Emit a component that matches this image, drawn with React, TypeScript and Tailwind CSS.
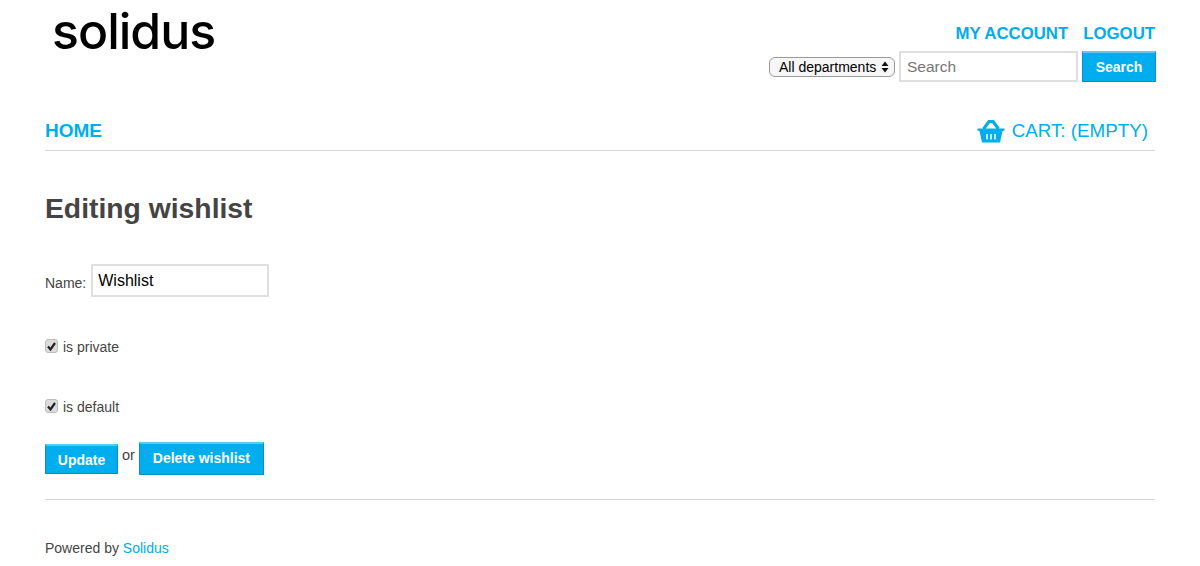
const sans = "font-['Liberation_Sans',Arial,sans-serif]";

function Basket() {
  return (
    <svg width="28" height="24" viewBox="0 0 28 24" fill="#00adee" aria-hidden="true">
      <path d="M0.5 9.5H27.5V11.5L25.5 12L23 23.5H5L2.5 12L0.5 11.5Z" />
      <path d="M6.5 10L12 2.5M21.5 10L16 2.5" stroke="#00adee" strokeWidth="3" fill="none" />
      <path d="M11 1H17V4H11Z" />
      <path d="M10 15V20.5M14 15V20.5M18 15V20.5" stroke="#fff" strokeWidth="1.5" fill="none" />
    </svg>
  );
}

function Check({ label }: { label: string }) {
  return (
    <label className="flex items-start h-[20px] text-[14px] text-[#444]">
      <span className="w-[13px] h-[14px] rounded-[3px] border border-[#bdbdbd] bg-[#dcdcdc] flex items-center justify-center">
        <svg width="11" height="11" viewBox="0 0 11 11" aria-hidden="true">
          <path d="M2 5.5L4.5 8.5L9 2" stroke="#222" strokeWidth="2.2" fill="none" />
        </svg>
      </span>
      <span className="ml-[5px] mt-[-2px]">{label}</span>
    </label>
  );
}

function Btn({ children, className }: { children: string; className: string }) {
  return (
    <button className={`bg-[#00adee] text-white font-bold text-[14px] border border-[#0b8fc4] border-t-[#5cc8f2] border-t-2 ${className}`}>
      {children}
    </button>
  );
}

export default function App() {
  return (
    <div className={`${sans} bg-white h-[566px] overflow-hidden px-[45px] text-[#444]`}>
      <header className="flex justify-between h-[100px]">
        <div className="ml-[7px] mt-[3px] font-['Inter',sans-serif] font-medium text-[50px] leading-[56px] tracking-[-1px] text-black">
          solidus
        </div>
        <div className="flex flex-col items-end">
          <nav className="flex gap-[15px] mt-[24px] h-[27px] text-[16.8px] leading-[20px] font-bold text-[#00adee]">
            <a>MY ACCOUNT</a>
            <a>LOGOUT</a>
          </nav>
          <div className="flex items-center mr-[-1px]">
            <div className="relative flex items-center w-[126px] h-[20px] rounded-[6px] border border-[#9a9a9a] bg-[#f6f6f6] pl-[9px] pt-[1px] text-[14px] text-black">
              All departments
              <svg className="absolute right-[5px] top-[3px]" width="8" height="12" viewBox="0 0 8 12" aria-hidden="true">
                <path d="M4 0.5L7.5 5H0.5ZM4 11.5L0.5 7H7.5Z" fill="#111" />
              </svg>
            </div>
            <input
              placeholder="Search"
              className="ml-[4px] w-[179px] h-[31px] border-2 border-[#dfdfdf] px-[6px] text-[15.5px] placeholder:text-[#757575] outline-none"
            />
            <Btn className="ml-[4px] w-[74px] h-[31px]">Search</Btn>
          </div>
        </div>
      </header>

      <div className="flex justify-between items-center h-[51px] border-b border-[#d6d6d6] text-[#00adee]">
        <a className="font-bold text-[19px] mt-[12px]">HOME</a>
        <div className="flex items-center mt-[12px] mr-[7px]">
          <Basket />
          <span className="ml-[7px] text-[18.8px]">CART: (EMPTY)</span>
        </div>
      </div>

      <h1 className="mt-[39px] text-[28.3px] leading-[36px] font-bold">Editing wishlist</h1>

      <div className="flex items-center mt-[38px] h-[33px] text-[14px]">
        <span className="mt-[5px]">Name:</span>
        <input
          defaultValue="Wishlist"
          className="ml-[5px] w-[178px] h-[33px] border-2 border-[#dfdfdf] px-[5px] text-[16px] text-black outline-none"
        />
      </div>

      <div className="mt-[42px]"><Check label="is private" /></div>
      <div className="mt-[40px]"><Check label="is default" /></div>

      <div className="flex items-start mt-[23px] text-[14.5px]">
        <Btn className="mt-[2px] w-[73px] h-[30px] pt-[1px]">Update</Btn>
        <span className="ml-[4px] mt-[3px]">or</span>
        <Btn className="ml-[4px] w-[125px] h-[33px] pb-[2px]">Delete wishlist</Btn>
      </div>

      <div className="mt-[24px] border-t border-[#d6d6d6]" />
      <p className="mt-[38px] text-[14px]">
        Powered by <a className="text-[#00adee]">Solidus</a>
      </p>
    </div>
  );
}
